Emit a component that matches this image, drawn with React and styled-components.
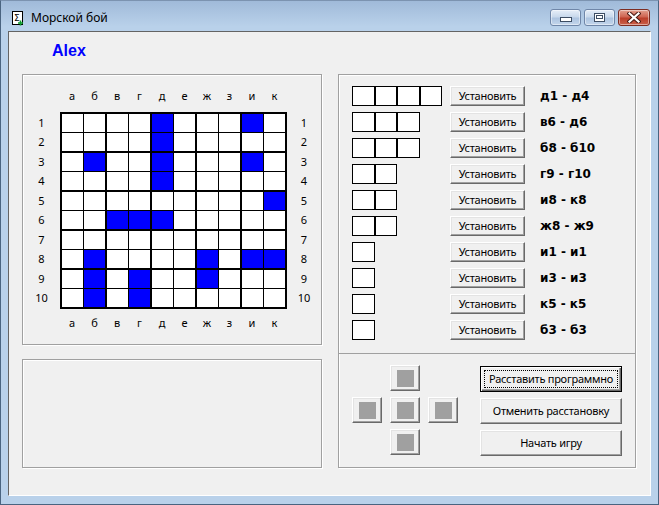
import React from 'react'
import { styled, createGlobalStyle } from 'styled-components'

const GlobalStyle = createGlobalStyle`
html, body {
  margin: 0;
  padding: 0;
  background: #b9d1ea;
}
* { box-sizing: border-box; }
`

const LETTERS = ['а', 'б', 'в', 'г', 'д', 'е', 'ж', 'з', 'и', 'к']

// ship cells on the board: [row, col]
const SHIPS = [
  [0, 4], [1, 4], [2, 4], [3, 4],
  [5, 2], [5, 3], [5, 4],
  [7, 1], [8, 1], [9, 1],
  [8, 3], [9, 3],
  [7, 8], [7, 9],
  [7, 6], [8, 6],
  [0, 8], [2, 8], [4, 9], [2, 1],
]

const FLEET = [
  { size: 4, pos: 'д1 - д4' },
  { size: 3, pos: 'в6 - д6' },
  { size: 3, pos: 'б8 - б10' },
  { size: 2, pos: 'г9 - г10' },
  { size: 2, pos: 'и8 - к8' },
  { size: 2, pos: 'ж8 - ж9' },
  { size: 1, pos: 'и1 - и1' },
  { size: 1, pos: 'и3 - и3' },
  { size: 1, pos: 'к5 - к5' },
  { size: 1, pos: 'б3 - б3' },
]

const Window = styled.div`
width: 659px;
height: 505px;
background: #b9d1ea;
border: 1px solid #4a6480;
border-top-color: #7c93b0;
display: flex;
flex-direction: column;
font-family: "Noto Sans", "Liberation Sans", sans-serif;
`

const TitleBar = styled.div`
height: 30px;
flex-shrink: 0;
display: flex;
align-items: flex-start;
padding: 0 8px 0 11px;
background: linear-gradient(#a0bad9, #b9d1ea 85%);
`

const AppIcon = styled.svg`
width: 12px;
height: 15px;
margin-top: 10px;
`

const Caption = styled.span`
margin-left: 7px;
margin-top: 9px;
font-size: 12px;
line-height: 15px;
color: #000;
`

const Controls = styled.div`
margin-left: auto;
margin-top: 8px;
display: flex;
gap: 3px;
`

const CtrlButton = styled.div`
width: ${p => p.$wide ? 32 : 31}px;
height: 17px;
border-radius: 3px;
border: 1px solid ${p => p.$close ? '#7d2d22' : '#6f86a8'};
background: ${p => p.$close
    ? 'linear-gradient(#e3a08f, #cf6552 45%, #bb3e2a 55%, #c9614b)'
    : 'linear-gradient(#e6eef8, #c9d9ec 45%, #adc4e0 55%, #c4d6ec)'};
display: flex;
align-items: center;
justify-content: center;
box-shadow: inset 0 0 0 1px rgba(255,255,255,0.45);
`

const Client = styled.div`
margin: 0 7px;
height: 465px;
background: #f0f0f0;
border-left: 1px solid #646464;
border-top: 1px solid #646464;
border-right: 1px solid #fff;
border-bottom: 1px solid #fff;
display: flex;
flex-direction: column;
`

const Header = styled.div`
height: 42px;
padding: 10px 0 0 43px;
`

const PlayerName = styled.div`
font-family: "Liberation Sans", Arial, sans-serif;
font-weight: bold;
font-size: 16px;
line-height: 18px;
color: #0000ff;
`

const Body = styled.div`
display: flex;
gap: 16px;
padding-left: 13px;
`

const LeftColumn = styled.div`
width: 300px;
display: flex;
flex-direction: column;
gap: 14px;
`

const GroupBox = styled.div`
width: ${p => p.$w}px;
height: ${p => p.$h}px;
border: 1px solid #a0a0a0;
box-shadow: 1px 1px 0 #fff, inset 1px 1px 0 #fff;
display: flex;
flex-direction: column;
`

const BoardArea = styled.div`
display: grid;
grid-template-columns: 37px 227px 34px;
grid-template-rows: 37px 197px 28px;
font-size: 11px;
color: #000;
`

const LetterRow = styled.div`
grid-column: 2;
display: grid;
grid-template-columns: repeat(5, 23px 22px);
align-items: center;
padding-top: ${p => p.$top ? 5 : 0}px;
`

const Letter = styled.span`
text-align: center;
line-height: 14px;
padding-left: 1px;
`

const NumberCol = styled.div`
grid-row: 2;
grid-column: ${p => p.$col};
display: grid;
grid-template-rows: repeat(5, 20px 19px);
align-items: center;
`

const RowNum = styled.span`
text-align: center;
line-height: 14px;
padding-top: 1px;
`

const Board = styled.div`
grid-row: 2;
grid-column: 2;
display: grid;
grid-template-columns: repeat(5, 23px 22px);
grid-template-rows: repeat(5, 20px 19px);
border-right: 2px solid #000;
border-bottom: 2px solid #000;
`

const Cell = styled.div`
background: ${p => p.$ship ? '#0000ff' : '#fff'};
border-left: ${p => p.$col % 2 === 0 ? 2 : 1}px solid #000;
border-top: ${p => p.$row % 2 === 0 ? 2 : 1}px solid #000;
`

const FleetSection = styled.div`
height: 278px;
padding: 11px 0 0 13px;
display: flex;
flex-direction: column;
gap: 6px;
`

const FleetRow = styled.div`
display: flex;
align-items: center;
height: 20px;
`

const ShipShape = styled.div`
width: 98px;
display: flex;
`

const ShipCell = styled.div`
width: 22.5px;
height: 20px;
border: 1px solid #000;
background: #fff;
`

const Button = styled.button`
width: ${p => p.$w}px;
height: ${p => p.$h}px;
padding: 0;
background: #f0f0f0;
border: 1px solid;
border-color: #fff #696969 #696969 #fff;
box-shadow: inset -1px -1px 0 #a0a0a0, inset 1px 1px 0 #e3e3e3;
font-family: "Noto Sans", "Liberation Sans", sans-serif;
font-size: 11px;
letter-spacing: -0.25px;
line-height: 14px;
color: #000;
position: relative;
${p => p.$default && `
  border: 1px solid #000;
  box-shadow: inset 1px 1px 0 #fff, inset -1px -1px 0 #696969, inset -2px -2px 0 #a0a0a0;
  &::after {
    content: '';
    position: absolute;
    inset: 3px;
    border: 1px dotted #000;
  }
`}
`

const ShipPos = styled.span`
margin-left: 15px;
font-family: "DejaVu Sans", sans-serif;
font-weight: bold;
font-size: 12px;
color: #000;
`

const ControlSection = styled.div`
border-top: 1px solid #a0a0a0;
flex: 1;
padding: 11px 0 0 13px;
display: flex;
gap: 22px;
`

const Pad = styled.div`
display: grid;
grid-template-columns: repeat(3, 30px);
grid-template-rows: repeat(3, 26px);
column-gap: 8px;
row-gap: 6px;
`

const PadButton = styled.div`
grid-row: ${p => p.$r};
grid-column: ${p => p.$c};
background: #f0f0f0;
border: 1px solid;
border-color: #fff #696969 #696969 #fff;
box-shadow: inset -1px -1px 0 #a0a0a0, inset 1px 1px 0 #e3e3e3;
display: flex;
align-items: center;
justify-content: center;
`

const PadFace = styled.div`
width: 17px;
height: 17px;
background: #a0a0a0;
`

const ActionList = styled.div`
display: flex;
flex-direction: column;
gap: 6px;
margin-top: 1px;
`

const App = () => {
  const shipSet = new Set(SHIPS.map(([r, c]) => r * 10 + c))
  const cells = []
  for (let r = 0; r < 10; r++) {
    for (let c = 0; c < 10; c++) {
      cells.push(<Cell key={r * 10 + c} $row={r} $col={c} $ship={shipSet.has(r * 10 + c)} />)
    }
  }
  const numbers = Array.from({ length: 10 }, (_, i) => <RowNum key={i}>{i + 1}</RowNum>)
  const letters = LETTERS.map(l => <Letter key={l}>{l}</Letter>)

  return (
    <>
      <GlobalStyle />
      <Window>
        <TitleBar>
          <AppIcon viewBox="0 0 12 15">
            <rect x="0.5" y="0.5" width="10" height="13" fill="#fff" stroke="#000" />
            <text x="2" y="10" fontSize="9" fontFamily="DejaVu Sans" fill="#000">Σ</text>
            <path d="M8.5 9.5v5M6 12h5" stroke="#0a9a28" strokeWidth="1.6" />
          </AppIcon>
          <Caption>Морской бой</Caption>
          <Controls>
            <CtrlButton>
              <svg width="12" height="6" viewBox="0 0 12 6" style={{ marginTop: 5 }}>
                <rect x="0.5" y="0.5" width="11" height="4" fill="#fff" stroke="#3d4d63" />
              </svg>
            </CtrlButton>
            <CtrlButton>
              <svg width="11" height="9" viewBox="0 0 11 9">
                <rect x="0.5" y="0.5" width="10" height="8" fill="#fff" stroke="#3d4d63" />
                <rect x="2.5" y="2.5" width="6" height="3" fill="#fff" stroke="#3d4d63" />
              </svg>
            </CtrlButton>
            <CtrlButton $close $wide>
              <svg width="14" height="11" viewBox="0 0 14 11">
                <path d="M2.5 1.5l9 8M11.5 1.5l-9 8" stroke="#4a1a14" strokeWidth="4.2" strokeLinecap="square" />
                <path d="M2.5 1.5l9 8M11.5 1.5l-9 8" stroke="#fff" strokeWidth="2.2" strokeLinecap="square" />
              </svg>
            </CtrlButton>
          </Controls>
        </TitleBar>

        <Client>
          <Header>
            <PlayerName>Alex</PlayerName>
          </Header>
          <Body>
            <LeftColumn>
              <GroupBox $w={300} $h={271}>
                <BoardArea>
                  <LetterRow $top>{letters}</LetterRow>
                  <NumberCol $col={1}>{numbers}</NumberCol>
                  <Board>{cells}</Board>
                  <NumberCol $col={3}>{numbers}</NumberCol>
                  <LetterRow>{letters}</LetterRow>
                </BoardArea>
              </GroupBox>
              <GroupBox $w={300} $h={109} />
            </LeftColumn>

            <GroupBox $w={298} $h={394}>
              <FleetSection>
                {FLEET.map((s, i) => (
                  <FleetRow key={i}>
                    <ShipShape>
                      {Array.from({ length: s.size }, (_, k) => <ShipCell key={k} />)}
                    </ShipShape>
                    <Button $w={75} $h={20}>Установить</Button>
                    <ShipPos>{s.pos}</ShipPos>
                  </FleetRow>
                ))}
              </FleetSection>
              <ControlSection>
                <Pad>
                  <PadButton $r={1} $c={2}><PadFace /></PadButton>
                  <PadButton $r={2} $c={1}><PadFace /></PadButton>
                  <PadButton $r={2} $c={2}><PadFace /></PadButton>
                  <PadButton $r={2} $c={3}><PadFace /></PadButton>
                  <PadButton $r={3} $c={2}><PadFace /></PadButton>
                </Pad>
                <ActionList>
                  <Button $w={142} $h={26} $default>Расставить программно</Button>
                  <Button $w={142} $h={26}>Отменить расстановку</Button>
                  <Button $w={142} $h={26}>Начать игру</Button>
                </ActionList>
              </ControlSection>
            </GroupBox>
          </Body>
        </Client>
      </Window>
    </>
  )
}

export default App
